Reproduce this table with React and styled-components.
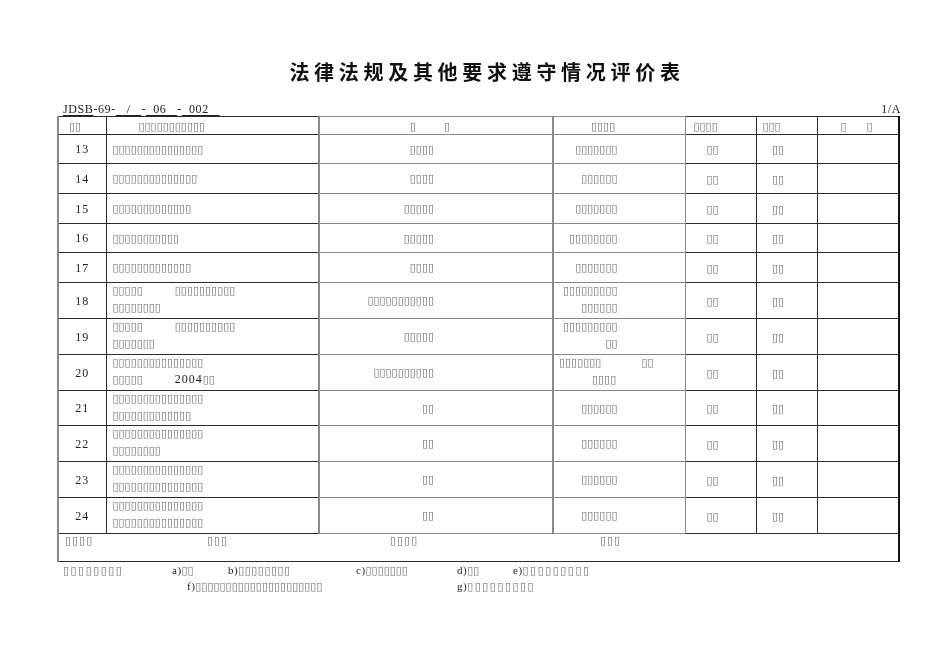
import React from 'react';
import styled, { createGlobalStyle } from 'styled-components';

const GlobalStyle = createGlobalStyle`
 body {
   margin: 0;
   background: #fff;
   color: #222;
   font-family: "Liberation Serif", "DejaVu Sans", serif;
 }
`;

// missing-glyph boxes, as the source document shows them
const B = (n) => '\u25AF'.repeat(n);

const Page = styled.div`
 width: 950px;
 padding-top: 60px;
 background: #fff;
 filter: grayscale(1);
`;

const Title = styled.h1`
 margin: 0;
 padding-left: 24px;
 text-align: center;
 font-family: "Noto Sans CJK SC", sans-serif;
 font-weight: 700;
 font-size: 20px;
 line-height: 24px;
 letter-spacing: 4.7px;
 color: #111;
`;

const CodeRow = styled.div`
 display: flex;
 justify-content: space-between;
 align-items: flex-end;
 margin: 16px 49px 0 63px;
 height: 16px;
 font-size: 12px;
 line-height: 14px;
 letter-spacing: 0.6px;
 white-space: pre;
`;

const U = styled.span`
 text-decoration: underline;
 text-underline-offset: 2px;
`;

const Table = styled.table`
 margin-left: 57px;
 width: 841px;
 border-collapse: collapse;
 table-layout: fixed;
 border-right: 2px solid #111;
`;

const Row = styled.tr`
 height: ${(p) => p.$h}px;
`;

const Cell = styled.td`
 padding: 0 ${(p) => p.$pr || 0}px 0 ${(p) => p.$pl || 0}px;
 border: 1px solid ${(p) => (p.$soft ? '#8a8a8a' : '#2a2a2a')};
 border-left-width: ${(p) => (p.$soft ? 2 : 1)}px;
 text-align: ${(p) => p.$align || 'left'};
 vertical-align: middle;
 font-size: 12px;
 line-height: 16px;
 letter-spacing: 1px;
 white-space: pre;
 overflow: hidden;
`;

const EdgeCell = styled(Cell)`
 border-left: 2px solid #8a8a8a;
`;

const Tofu = styled.span`
 font-family: "DejaVu Sans", sans-serif;
 font-size: 11px;
 line-height: 1;
 letter-spacing: ${(p) => p.$sp ?? 0}px;
 color: #6e6e6e;
`;

const Stack = styled.div`
 margin-top: -3px;
`;

const Line = styled.div`
 padding-left: ${(p) => p.$indent || 0}px;
 line-height: 17px;
`;

const FootCell = styled.td`
 border: 1px solid #2a2a2a;
 border-left: 2px solid #8a8a8a;
 padding: 1px 0 0 6px;
 vertical-align: top;
 font-size: 11px;
 line-height: 14px;
`;

const FootGrid = styled.div`
 display: grid;
 grid-template-columns: 142px 183px 210px auto;
`;

const Notes = styled.div`
 margin-left: 63px;
 font-size: 11px;
 line-height: 16px;
`;

const NoteLine = styled.div`
 display: flex;
 padding-left: ${(p) => p.$indent || 0}px;
`;

const NoteItem = styled.span`
 width: ${(p) => (p.$w ? `${p.$w}px` : 'auto')};
 flex-shrink: 0;
 white-space: pre;
 letter-spacing: 0.5px;
`;

// Renders text, turning box runs into tofu spans
const T = ({ children, sp }) => {
  const parts = String(children).split(/(\u25AF+)/);
  return parts.map((s, i) =>
    s.startsWith('\u25AF') ? (
      <Tofu key={i} $sp={sp}>{s}</Tofu>
    ) : (
      <React.Fragment key={i}>{s}</React.Fragment>
    )
  );
};

const Lines = ({ lines, indents = [] }) => {
  const list = Array.isArray(lines) ? lines : [lines];
  const body = list.map((l, i) => (
    <Line key={i} $indent={indents[i]}>
      <T>{l}</T>
    </Line>
  ));
  return list.length > 1 ? <Stack>{body}</Stack> : body;
};

const header = [
  { t: B(2), pl: 10 },
  { t: B(11), pl: 32 },
  { t: B(1) + '       ' + B(1), pl: 90, soft: true },
  { t: B(4), pl: 37, soft: true },
  { t: B(4), pl: 8 },
  { t: B(3), pl: 6 },
  { t: B(1) + '     ' + B(1), pl: 23 },
];

const rows = [
  { no: '13', h: 29, name: B(15), issue: B(4), date: B(7) },
  { no: '14', h: 30, name: B(14), issue: B(4), date: B(6) },
  { no: '15', h: 30, name: B(13), issue: B(5), date: B(7) },
  { no: '16', h: 29, name: B(11), issue: B(5), date: B(8) },
  { no: '17', h: 30, name: B(13), issue: B(4), date: B(7) },
  { no: '18', h: 36, name: [B(5) + '        ' + B(10), B(8)], issue: B(11), date: [B(9), B(6)] },
  { no: '19', h: 36, name: [B(5) + '        ' + B(10), B(7)], issue: B(5), date: [B(9), B(2)] },
  {
    no: '20', h: 36, name: [B(15), B(5) + '        2004' + B(2)], issue: B(10),
    date: [B(7) + '          ' + B(2), B(4)], dateLeft: true, dateIndents: [5, 38],
  },
  { no: '21', h: 35, name: [B(15), B(13)], issue: B(2), date: B(6) },
  { no: '22', h: 36, name: [B(15), B(8)], issue: B(2), date: B(6) },
  { no: '23', h: 36, name: [B(15), B(15)], issue: B(2), date: B(6) },
  { no: '24', h: 36, name: [B(15), B(15)], issue: B(2), date: B(6) },
];

const App = () => (
  <Page>
    <GlobalStyle />
    <Title>法律法规及其他要求遵守情况评价表</Title>
    <CodeRow>
      <span>
        <U>JDSB</U>-69-<U>   /   </U>-<U>  06   </U>-<U>  002   </U>
      </span>
      <span>1/A</span>
    </CodeRow>
    <Table>
      <colgroup>
        <col style={{ width: 48 }} />
        <col style={{ width: 213 }} />
        <col style={{ width: 234 }} />
        <col style={{ width: 132 }} />
        <col style={{ width: 71 }} />
        <col style={{ width: 61 }} />
        <col style={{ width: 82 }} />
      </colgroup>
      <tbody>
        <Row $h={18}>
          {header.map((c, i) =>
            i === 0 ? (
              <EdgeCell key={i} $pl={c.pl}>
                <T>{c.t}</T>
              </EdgeCell>
            ) : (
              <Cell key={i} $pl={c.pl} $soft={c.soft}>
                <T>{c.t}</T>
              </Cell>
            )
          )}
        </Row>
        {rows.map((r) => (
          <Row key={r.no} $h={r.h}>
            <EdgeCell $align="center">{r.no}</EdgeCell>
            <Cell $pl={6}>
              <Lines lines={r.name} />
            </Cell>
            <Cell $align="right" $pr={118} $soft>
              <Lines lines={r.issue} />
            </Cell>
            {r.dateLeft ? (
              <Cell $soft>
                <Lines lines={r.date} indents={r.dateIndents} />
              </Cell>
            ) : (
              <Cell $align="right" $pr={67} $soft>
                <Lines lines={r.date} />
              </Cell>
            )}
            <Cell $align="center" $pr={16}>
              <T>{B(2)}</T>
            </Cell>
            <Cell $align="center" $pr={17}>
              <T>{B(2)}</T>
            </Cell>
            <Cell />
          </Row>
        ))}
        <Row $h={28}>
          <FootCell colSpan={7}>
            <FootGrid>
              <T sp={1}>{B(4)}</T>
              <T sp={1}>{B(3)}</T>
              <T sp={1}>{B(4)}</T>
              <T sp={1}>{B(3)}</T>
            </FootGrid>
          </FootCell>
        </Row>
      </tbody>
    </Table>
    <Notes>
      <NoteLine>
        <NoteItem $w={109}><T sp={1.5}>{B(8)}</T></NoteItem>
        <NoteItem $w={56}><T>{'a)' + B(2)}</T></NoteItem>
        <NoteItem $w={128}><T sp={0.5}>{'b)' + B(8)}</T></NoteItem>
        <NoteItem $w={101}><T>{'c)' + B(7)}</T></NoteItem>
        <NoteItem $w={56}><T>{'d)' + B(2)}</T></NoteItem>
        <NoteItem><T sp={1.5}>{'e)' + B(9)}</T></NoteItem>
      </NoteLine>
      <NoteLine $indent={124}>
        <NoteItem $w={270}><T>{'f)' + B(21)}</T></NoteItem>
        <NoteItem><T sp={1.5}>{'g)' + B(9)}</T></NoteItem>
      </NoteLine>
    </Notes>
  </Page>
);

export default App;
